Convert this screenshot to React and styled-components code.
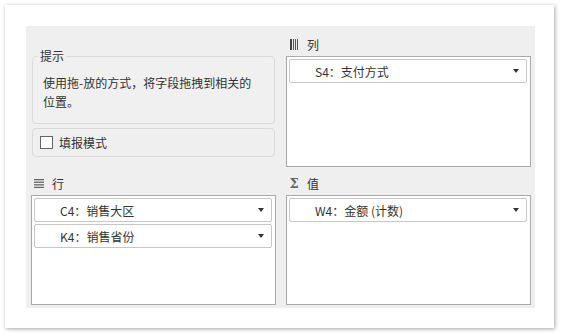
import React from "react";
import styled, { createGlobalStyle } from "styled-components";

const Global = createGlobalStyle`
  html, body { margin: 0; padding: 0; background: #ffffff; }
  body { font-family: "Noto Sans CJK SC", "Noto Sans", sans-serif; font-size: 12px; color: #333; }
  * { box-sizing: border-box; }
`;

const Card = styled.div`
  margin: 5px;
  width: 549px;
  height: 323px;
  background: #fff;
  box-shadow: 1px 1px 4px rgba(0, 0, 0, 0.35);
  padding: 21px 19px 20px 21px;
`;

const Panel = styled.div`
  width: 509px;
  height: 282px;
  background: #efefef;
  display: grid;
  grid-template-columns: 245px 245px;
  grid-template-rows: 141px 138px;
  column-gap: 10px;
  padding: 0 4px 3px 5px;
`;

const Cell = styled.div`
  display: flex;
  flex-direction: column;
  min-height: 0;
`;

const Hint = styled.fieldset`
  margin: 23px 1px 0 1px;
  padding: 10px 14px 12px 10px;
  border: 1px solid #dadada;
  border-radius: 4px;
  background: #f0f0f0;
  min-width: 0;
`;

const Legend = styled.legend`
  margin-left: -5px;
  padding: 0 2px;
  font-size: 12px;
  line-height: 14px;
  color: #333;
`;

const HintText = styled.div`
  line-height: 19px;
  color: #333;
`;

const CheckRow = styled.label`
  margin: 4px 1px 0 1px;
  height: 29px;
  border: 1px solid #dadada;
  border-radius: 4px;
  display: flex;
  align-items: center;
  gap: 6px;
  padding-left: 7px;
`;

const CheckBox = styled.span`
  width: 13px;
  height: 13px;
  border: 1px solid #666;
  background: #fff;
`;

const Label = styled.div`
  height: ${(p) => p.$h}px;
  padding-top: ${(p) => p.$pt}px;
  padding-left: 3px;
  display: flex;
  align-items: center;
  gap: 8px;
  font-size: 12px;
  color: #333;
  flex: none;
`;

const IconBox = styled.span`
  width: 10px;
  display: inline-flex;
  align-items: center;
  justify-content: center;
  color: #555;
`;

const Sigma = styled.span`
  font-family: "DejaVu Serif", serif;
  font-size: 13px;
  font-weight: bold;
  color: #666;
  line-height: 1;
`;

const Box = styled.div`
  flex: 1;
  background: #fff;
  border: 1px solid #a9a9a9;
  padding: 2px 3px 2px 2px;
  display: flex;
  flex-direction: column;
  gap: 2px;
`;

const Item = styled.div`
  height: 24px;
  border: 1px solid #c6c6c6;
  border-radius: 2px;
  display: flex;
  align-items: center;
  padding-left: 25px;
  padding-right: 7px;
  color: #333;
  background: #fff;
`;

const ItemText = styled.span`
  flex: 1;
  white-space: nowrap;
`;

const Caret = styled.span`
  width: 0;
  height: 0;
  border-left: 3px solid transparent;
  border-right: 3px solid transparent;
  border-top: 4px solid #333;
`;

const ColIcon = () => (
  <svg width="9" height="11" viewBox="0 0 9 11">
    <rect x="0" y="0" width="2" height="11" fill="#444" />
    <rect x="3" y="0" width="1" height="11" fill="#555" />
    <rect x="5" y="0" width="1" height="11" fill="#555" />
    <rect x="7" y="0" width="1" height="11" fill="#555" />
  </svg>
);

const RowIcon = () => (
  <svg width="10" height="9" viewBox="0 0 10 9">
    <rect x="0" y="0" width="10" height="1.3" fill="#666" />
    <rect x="0" y="2.6" width="10" height="1.3" fill="#666" />
    <rect x="0" y="5.2" width="10" height="1.3" fill="#666" />
    <rect x="0" y="7.8" width="10" height="1.2" fill="#666" />
  </svg>
);

const Field = ({ text }) => (
  <Item>
    <ItemText>{text}</ItemText>
    <Caret />
  </Item>
);

export default function App() {
  return (
    <>
      <Global />
      <Card>
        <Panel>
          <Cell>
            <Hint>
              <Legend>提示</Legend>
              <HintText>使用拖-放的方式，将字段拖拽到相关的位置。</HintText>
            </Hint>
            <CheckRow>
              <CheckBox />
              <span>填报模式</span>
            </CheckRow>
          </Cell>
          <Cell>
            <Label $h={30} $pt={6}>
              <IconBox><ColIcon /></IconBox>
              <span>列</span>
            </Label>
            <Box>
              <Field text="S4：支付方式" />
            </Box>
          </Cell>
          <Cell>
            <Label $h={28} $pt={4}>
              <IconBox><RowIcon /></IconBox>
              <span>行</span>
            </Label>
            <Box>
              <Field text="C4：销售大区" />
              <Field text="K4：销售省份" />
            </Box>
          </Cell>
          <Cell>
            <Label $h={28} $pt={4}>
              <IconBox><Sigma>Σ</Sigma></IconBox>
              <span>值</span>
            </Label>
            <Box>
              <Field text="W4：金额 (计数)" />
            </Box>
          </Cell>
        </Panel>
      </Card>
    </>
  );
}
